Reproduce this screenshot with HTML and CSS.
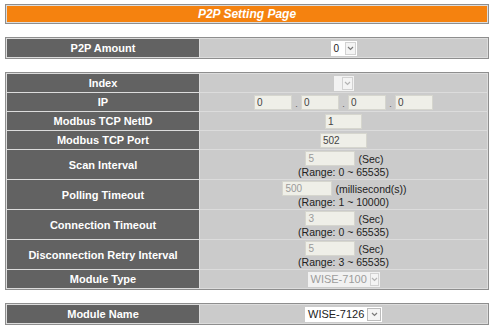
FILE: index.html
```html
<!DOCTYPE html>
<html lang="en">
<head>
    <meta charset="UTF-8">
    <meta name="viewport" content="width=device-width, initial-scale=1.0">
    <title>P2P Setting Page</title>
    <link rel="stylesheet" href="styles.css">
</head>
<body>
    <div class="page">
        <table class="title">
            <tr><td>P2P Setting Page</td></tr>
        </table>

        <table class="form">
            <tr>
                <th>P2P Amount</th>
                <td>
                    <span class="select amount">
                        <span class="val">0</span>
                        <span class="arrow"><svg width="7" height="5" viewBox="0 0 7 5"><polyline points="1,1 3.5,3.5 6,1"/></svg></span>
                    </span>
                </td>
            </tr>
        </table>

        <table class="form">
            <tr>
                <th>Index</th>
                <td>
                    <span class="select disabled index">
                        <span class="val"></span>
                        <span class="arrow"><svg width="7" height="5" viewBox="0 0 7 5"><polyline points="1,1 3.5,3.5 6,1"/></svg></span>
                    </span>
                </td>
            </tr>
            <tr>
                <th>IP</th>
                <td>
                    <div class="ip">
                        <input class="box ip-box" type="text" value="0" readonly>
                        <span class="dot">.</span>
                        <input class="box ip-box" type="text" value="0" readonly>
                        <span class="dot">.</span>
                        <input class="box ip-box" type="text" value="0" readonly>
                        <span class="dot">.</span>
                        <input class="box ip-box" type="text" value="0" readonly>
                    </div>
                </td>
            </tr>
            <tr>
                <th>Modbus TCP NetID</th>
                <td><input class="box netid" type="text" value="1" readonly></td>
            </tr>
            <tr>
                <th>Modbus TCP Port</th>
                <td><input class="box port" type="text" value="502" readonly></td>
            </tr>
            <tr class="tall">
                <th>Scan Interval</th>
                <td>
                    <div class="line"><input class="box faded" type="text" value="5" readonly> <span class="unit">(Sec)</span></div>
                    <div class="range">(Range: 0 ~ 65535)</div>
                </td>
            </tr>
            <tr class="tall">
                <th>Polling Timeout</th>
                <td>
                    <div class="line"><input class="box faded" type="text" value="500" readonly> <span class="unit">(millisecond(s))</span></div>
                    <div class="range">(Range: 1 ~ 10000)</div>
                </td>
            </tr>
            <tr class="tall">
                <th>Connection Timeout</th>
                <td>
                    <div class="line"><input class="box faded" type="text" value="3" readonly> <span class="unit">(Sec)</span></div>
                    <div class="range">(Range: 0 ~ 65535)</div>
                </td>
            </tr>
            <tr class="tall">
                <th>Disconnection Retry Interval</th>
                <td>
                    <div class="line"><input class="box faded" type="text" value="5" readonly> <span class="unit">(Sec)</span></div>
                    <div class="range">(Range: 3 ~ 65535)</div>
                </td>
            </tr>
            <tr>
                <th>Module Type</th>
                <td>
                    <span class="select disabled module">
                        <span class="val">WISE-7100</span>
                        <span class="arrow"><svg width="7" height="5" viewBox="0 0 7 5"><polyline points="1,1 3.5,3.5 6,1"/></svg></span>
                    </span>
                </td>
            </tr>
        </table>

        <table class="form last">
            <tr>
                <th>Module Name</th>
                <td>
                    <span class="select module name">
                        <span class="val">WISE-7126</span>
                        <span class="arrow"><svg width="7" height="5" viewBox="0 0 7 5"><polyline points="1,1 3.5,3.5 6,1"/></svg></span>
                    </span>
                </td>
            </tr>
        </table>
    </div>
</body>
</html>
```

FILE: styles.css
```css
* {
    box-sizing: border-box;
}

body {
    margin: 0;
    background-color: #fff;
    font-family: "Liberation Sans", Arial, sans-serif;
}

.page {
    width: 484px;
    margin: 4px 0 0 5px;
}

table {
    width: 100%;
    border: 1px solid #8e8e8e;
    border-spacing: 1px;
    background-color: #dcdcdc;
    margin-top: 13px;
}

.title {
    margin-top: 0;
}
.title td {
    height: 16px;
    padding: 0;
    background-color: #f5820f;
    color: #fff;
    font-size: 12px;
    font-weight: bold;
    font-style: italic;
    text-align: center;
}

th {
    width: 192px;
    height: 18px;
    padding: 0;
    background-color: #626262;
    color: #fff;
    font-size: 11px;
    font-weight: bold;
    text-align: center;
}
td {
    height: 18px;
    padding: 0;
    background-color: #cbcbcb;
    color: #222;
    font-size: 10px;
    text-align: center;
    vertical-align: middle;
}
.tall th,
.tall td {
    height: 29px;
}

/* text boxes */
.box {
    height: 15px;
    padding: 0 2px;
    border: 1px solid #d6d6ce;
    background-color: #efefe8;
    color: #444;
    font-family: "Liberation Sans", Arial, sans-serif;
    font-size: 10px;
    text-align: left;
    vertical-align: middle;
    outline: none;
}
.box.faded {
    width: 50px;
    color: #9a9a9a;
}
.netid {
    width: 37px;
}
.port {
    width: 47px;
}

.ip {
    display: flex;
    justify-content: center;
    align-items: center;
}
.ip-box {
    width: 38px;
}
.dot {
    width: 9px;
    padding-top: 4px;
    color: #555;
    font-size: 9px;
    text-align: center;
}

.line {
    display: flex;
    justify-content: center;
    align-items: center;
    gap: 3px;
    padding-left: 2px;
}
.unit {
    font-size: 10.5px;
    color: #222;
}
.range {
    font-size: 10.5px;
    line-height: 12px;
    color: #222;
}

/* drop-downs */
.select {
    display: inline-flex;
    align-items: stretch;
    height: 15px;
    vertical-align: middle;
    background-color: #fff;
    white-space: nowrap;
}
.select .val {
    display: flex;
    align-items: center;
    padding: 0 3px;
    font-size: 10px;
    color: #222;
}
.select .arrow {
    display: flex;
    align-items: center;
    justify-content: center;
    width: 11px;
    margin: 1px 1px 1px 0;
    border: 1px solid #d2d2d2;
    background-color: #f4f4f4;
}
.select .arrow svg {
    fill: none;
    stroke: #7a7a7a;
    stroke-width: 1.2;
}
.amount .val {
    width: 14px;
}
.index .val {
    width: 8px;
}
.index {
    background-color: #f2f2f2;
}
.disabled .arrow svg {
    stroke: #b4b4b4;
}
.module {
    width: 72px;
}
.module .val {
    flex: 1;
    font-size: 11px;
}
.module .arrow {
    width: 13px;
}
.disabled.module {
    background-color: #f1f1f1;
}
.disabled.module .val {
    color: #9c9c9c;
}
.name {
    width: 77px;
}
.name .arrow {
    width: 15px;
    border-color: #bcbcbc;
}
```
